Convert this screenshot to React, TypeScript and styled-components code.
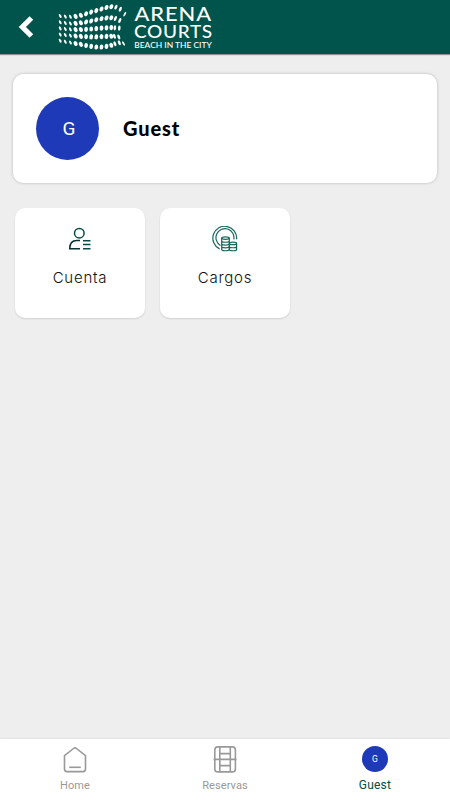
import React, {FunctionComponent, ReactNode} from 'react';
import styled, {createGlobalStyle} from 'styled-components';

const logoColumns = [60.2, 65.3, 70.4, 75.6, 80.9, 86.1, 91.2, 96.3, 101.5, 106.5, 111.3, 115.9, 120.3];
const logoRows = [
    [16, 16.6, 16.8, 16.4, 15.3, 13.8, 12.1, 10.6, 9, 7.5, 6.7, 7.1, 9.2],
    [22.3, 23, 23.5, 23.4, 22.8, 22, 21, 19.8, 18.7, 18, 17.8, 18.5, 20.5],
    [28.4, 29, 29.4, 29.6, 29.5, 29.3, 29, 28.6, 28.2, 27.8, 27.6, 27.8, 28.2],
    [34.6, 35, 35.6, 36, 36.4, 36.7, 36.8, 36.8, 36.7, 36.4, 36.2, 36.3, 36.9],
    [40.8, 41.7, 42.6, 43.5, 44.4, 45.5, 46.4, 47, 47, 46.4, 45.3, 43.8, 42.8],
];

const dotTilt = (row: number, column: number) => {
    if (column < 5) {
        return -28;
    }
    if (row < 2) {
        return 24;
    }
    if (row === 2) {
        return 5;
    }
    return column > 9 ? -22 : 10;
};

const Logo: FunctionComponent = () => (
    <LogoSvg width="160" height="54" viewBox="56 0 160 54">
        {logoRows.map((row, r) => row.map((y, c) => {
            const x = logoColumns[c] - (r > 0 && c > 10 ? (3 - Math.abs(r - 3)) * 0.5 : 0);
            const rx = c < 3 ? 1.1 : c < 11 ? 1.9 : 1.3;
            return (
                <ellipse
                    key={`${r}-${c}`}
                    cx={x}
                    cy={y}
                    rx={rx}
                    ry={c < 3 ? 2.2 : 2.6}
                    transform={`rotate(${dotTilt(r, c)} ${x} ${y})`}
                />
            );
        }))}
        <ellipse cx="124.8" cy="14.2" rx=".9" ry="2.6" transform="rotate(28 124.8 14.2)"/>
        <ellipse cx="123.5" cy="43.5" rx=".9" ry="2.5" transform="rotate(-30 123.5 43.5)"/>
        <text x="134.5" y="21" fontSize="18.8" textLength="77.5" lengthAdjust="spacingAndGlyphs" letterSpacing=".8">ARENA</text>
        <text x="134" y="37.9" fontSize="17.6" textLength="78.8" lengthAdjust="spacingAndGlyphs" letterSpacing=".6">COURTS</text>
        <text x="134.3" y="47.9" fontSize="7.9" textLength="77.5" lengthAdjust="spacingAndGlyphs">BEACH IN THE CITY</text>
    </LogoSvg>
);

const BackIcon: FunctionComponent = () => (
    <svg width="16" height="24" viewBox="0 0 16 24">
        <path d="M13.4 3 4.4 12l9 9" fill="none" stroke="#fff" strokeWidth="5.2"/>
    </svg>
);

const AccountIcon: FunctionComponent = () => (
    <svg width="24" height="24" viewBox="0 0 24 24" fill="none" stroke="#0a4a45" strokeWidth="1.5">
        <circle cx="11.3" cy="6.2" r="4.8"/>
        <path d="M12 13.5H8.7Q1.7 13.5 1.7 21.8H12" stroke="#05332f"/>
        <path d="M15 13.7h7.5M15 17.6h7.5M15 21.8h7.5"/>
    </svg>
);

const ChargesIcon: FunctionComponent = () => (
    <svg width="26" height="26" viewBox="0 0 26 26" fill="none" stroke="#17665d" strokeWidth="1.2">
        <path d="M7.6 22.9A11.9 11.9 0 1 1 24.6 13.3M8.4 19.4A9 9 0 1 1 21.8 13.3"/>
        <ellipse cx="13.5" cy="12.1" rx="3.8" ry="1.3"/>
        <path d="M9.7 12.1v11.3c0 1.8 7.6 1.8 7.6 0V12.1M9.7 14.9c0 1.8 7.6 1.8 7.6 0M9.7 17.7c0 1.8 7.6 1.8 7.6 0M9.7 20.5c0 1.8 7.6 1.8 7.6 0"/>
        <ellipse cx="21" cy="17.4" rx="3.6" ry="1.3"/>
        <path d="M17.4 17.4v6c0 1.8 7.2 1.8 7.2 0v-6M17.4 20.4c0 1.8 7.2 1.8 7.2 0"/>
    </svg>
);

const HomeIcon: FunctionComponent = () => (
    <svg width="24" height="28" viewBox="0 0 24 28" fill="none" stroke="#999" strokeWidth="1.6">
        <path d="M1.5 10.7 10.5 3.5Q12 2.2 13.5 3.5L22.5 10.7V24Q22.5 26.6 20.1 26.6H3.9Q1.5 26.6 1.5 24Z" strokeLinejoin="round"/>
        <path d="M6.2 22.3h11.6"/>
    </svg>
);

const CourtIcon: FunctionComponent = () => (
    <svg width="24" height="28" viewBox="0 0 24 28" fill="none" stroke="#999" strokeWidth="1.6">
        <rect x="1.8" y="1.9" width="20.6" height="25" rx="3"/>
        <path d="M6.8 1.9v25M17.3 1.9v25M.5 14.4h23M6.8 8.6h10.5M6.8 20.6h10.5"/>
    </svg>
);

interface CardProps {
    icon: ReactNode;
    label: string;
}

const MenuCard: FunctionComponent<CardProps> = ({icon, label}) => (
    <Card>
        {icon}
        <CardLabel>{label}</CardLabel>
    </Card>
);

const App: FunctionComponent = () => (
    <Screen>
        <GlobalStyle/>
        <Header>
            <BackButton aria-label="Volver"><BackIcon/></BackButton>
            <Logo/>
        </Header>
        <Content>
            <Profile>
                <Avatar $size={63} $font={19}>G</Avatar>
                <ProfileName>Guest</ProfileName>
            </Profile>
            <Cards>
                <MenuCard icon={<AccountIcon/>} label="Cuenta"/>
                <MenuCard icon={<ChargesIcon/>} label="Cargos"/>
            </Cards>
        </Content>
        <TabBar>
            <Tab>
                <TabIcon><HomeIcon/></TabIcon>
                Home
            </Tab>
            <Tab>
                <TabIcon><CourtIcon/></TabIcon>
                Reservas
            </Tab>
            <Tab $active>
                <TabIcon><Avatar $size={26} $font={8.5}>G</Avatar></TabIcon>
                Guest
            </Tab>
        </TabBar>
    </Screen>
);

export default App;

const GlobalStyle = createGlobalStyle`
  * {
    box-sizing: border-box;
  }
  body {
    margin: 0;
  }
`;

const Screen = styled.div`
  display: flex;
  flex-direction: column;
  height: 100vh;
  background: #eee;
  font-family: Roboto, sans-serif;
`;

const Header = styled.header`
  display: flex;
  height: 54px;
  flex: none;
  background: #00544b;
  box-shadow: 0 1px 1px rgba(0, 0, 0, .4);
`;

const BackButton = styled.button`
  display: flex;
  align-items: center;
  width: 56px;
  padding: 0 0 0 18px;
  border: 0;
  background: none;
`;

const LogoSvg = styled.svg`
  fill: #fff;
  font-family: Lato, sans-serif;
  font-weight: 500;
`;

const Content = styled.main`
  flex: 1;
  padding: 20px 13px 0;
`;

const Profile = styled.section`
  display: flex;
  align-items: center;
  gap: 24px;
  height: 109px;
  padding-left: 23px;
  border-radius: 10px;
  background: #fff;
  box-shadow: 0 0 3px rgba(0, 0, 0, .25);
`;

const Avatar = styled.div<{$size: number; $font: number}>`
  display: flex;
  align-items: center;
  justify-content: center;
  width: ${props => props.$size}px;
  height: ${props => props.$size}px;
  padding-left: ${props => props.$size > 40 ? 3 : 0}px;
  border-radius: 50%;
  background: #1e3ab8;
  color: #fff;
  font-size: ${props => props.$font}px;
  letter-spacing: 0;
`;

const ProfileName = styled.div`
  padding-bottom: 2px;
  font-family: Lato, sans-serif;
  font-size: 20px;
  font-weight: 900;
  letter-spacing: .9px;
  color: #000;
`;

const Cards = styled.section`
  display: flex;
  gap: 15px;
  padding: 25px 2px 0;
`;

const Card = styled.div`
  display: flex;
  flex-direction: column;
  align-items: center;
  width: 130px;
  height: 110px;
  padding-top: 18px;
  border-radius: 10px;
  background: #fff;
  box-shadow: 0 1px 2px rgba(0, 0, 0, .13);

  svg {
    height: 26px;
  }
`;

const CardLabel = styled.div`
  margin-top: 15.5px;
  font-family: Inter, sans-serif;
  font-size: 15px;
  font-weight: 300;
  line-height: 20px;
  letter-spacing: .75px;
  color: #111;
`;

const TabBar = styled.nav`
  display: grid;
  grid-template-columns: repeat(3, 1fr);
  height: 61px;
  flex: none;
  background: #fff;
  box-shadow: 0 0 2px rgba(0, 0, 0, .12);
`;

const Tab = styled.div<{$active?: boolean}>`
  display: flex;
  flex-direction: column;
  align-items: center;
  padding-top: 6px;
  font-size: ${props => props.$active ? 12 : 11}px;
  line-height: ${props => props.$active ? 12 : 14}px;
  letter-spacing: ${props => props.$active ? .2 : .1}px;
  color: ${props => props.$active ? '#064b43' : '#999'};
`;

const TabIcon = styled.div`
  display: flex;
  align-items: center;
  height: 28px;
  margin-bottom: 6px;
`;
